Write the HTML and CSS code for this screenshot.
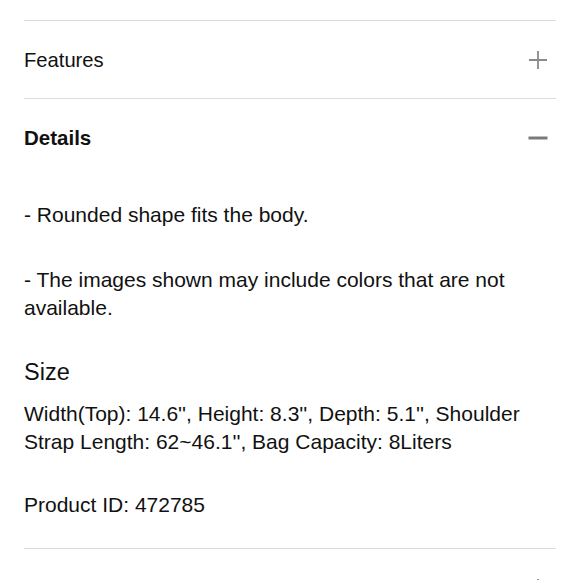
FILE: index.html
```html
<!DOCTYPE html>
<html lang="en">
<head>
<meta charset="utf-8">
<title>Product details</title>
<link rel="stylesheet" href="styles.css">
</head>
<body>
<div class="accordion">
  <div class="item">
    <div class="header">
      <span class="title">Features</span>
      <svg class="icon" width="20" height="20" viewBox="0 0 20 20"><path d="M10 1V19M1 10H19" stroke="#8a8a8a" stroke-width="1.8" fill="none"/></svg>
    </div>
  </div>
  <div class="item open">
    <div class="header">
      <span class="title bold">Details</span>
      <svg class="icon" width="20" height="20" viewBox="0 0 20 20"><path d="M0.5 10H19.5" stroke="#7a7a7a" stroke-width="3" fill="none"/></svg>
    </div>
    <div class="content">
      <p class="para first">- Rounded shape fits the body.</p>
      <p class="para">- The images shown may include colors that are not available.</p>
      <h3 class="subhead">Size</h3>
      <p class="para spec">Width(Top): 14.6'', Height: 8.3'', Depth: 5.1'', Shoulder Strap Length: 62~46.1'', Bag Capacity: 8Liters</p>
      <p class="para pid">Product ID: 472785</p>
    </div>
  </div>
  <div class="item">
    <div class="header">
      <span class="title"></span>
      <svg class="icon" width="20" height="20" viewBox="0 0 20 20"><path d="M10 1V19M1 10H19" stroke="#8a8a8a" stroke-width="1.8" fill="none"/></svg>
    </div>
  </div>
</div>
</body>
</html>
```

FILE: styles.css
```css
html, body {
  margin: 0;
  padding: 0;
  background: #ffffff;
}
body {
  font-family: "Liberation Sans", Arial, Helvetica, sans-serif;
  color: #111111;
}
.accordion {
  padding: 20px 24px 0;
}
.item {
  border-top: 1px solid #dcdcdc;
}
.header {
  display: flex;
  align-items: center;
  justify-content: space-between;
  height: 77px;
  padding-top: 0;
  box-sizing: border-box;
}
.title {
  font-size: 20.2px;
  line-height: 24px;
}
.title.bold {
  font-weight: bold;
  font-size: 20.5px;
}
.icon {
  display: block;
  margin-right: 8px;
}
.content {
  padding: 25px 0 29px;
}
.para {
  margin: 0;
  font-size: 21px;
  line-height: 28px;
}
.para + .para {
  margin-top: 37px;
}
.subhead {
  margin: 36px 0 0;
  font-size: 23.5px;
  font-weight: normal;
  line-height: 28px;
}
.para.spec {
  margin-top: 14px;
}
.para.pid {
  margin-top: 35px;
}
```
